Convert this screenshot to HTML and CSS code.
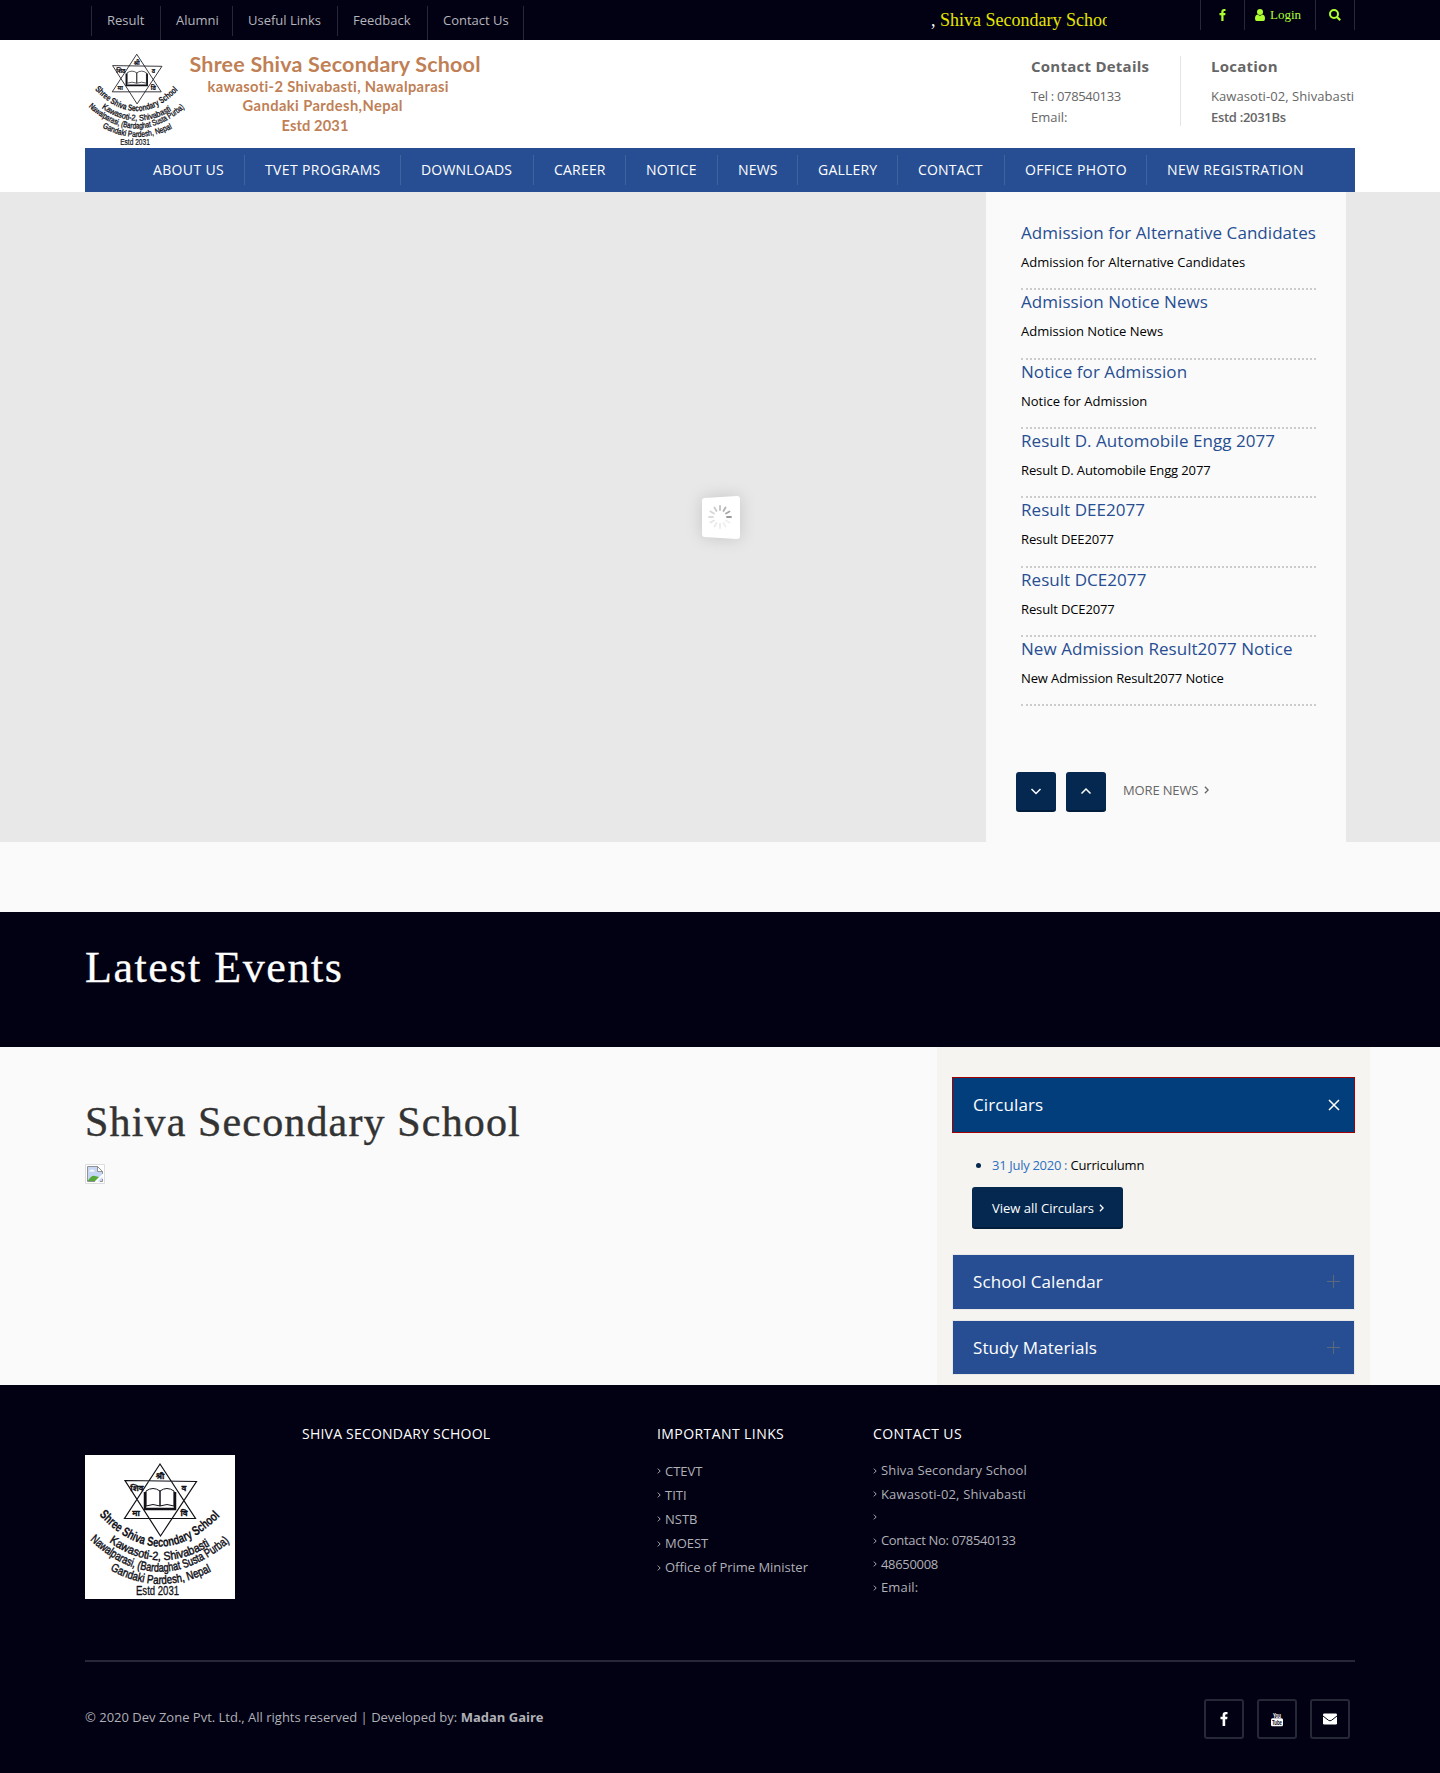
FILE: index.html
```html
<!DOCTYPE html>
<html lang="en">
<head>
<meta charset="utf-8">
<title>Shiva Secondary School</title>
<link rel="stylesheet" href="styles.css">
</head>
<body>
<svg class="defs" aria-hidden="true">
  <defs>
    <symbol id="crest" viewBox="0 0 150 144">
      <path d="M75 9 39.5 63.5h71zM40 25.5l71.500 1L75.500 81z" fill="none" stroke="#111118" stroke-width="1.200"/>
      <path d="M61 36q7-5 14 0v15q-7-3-14 0zM89 36q-7-5-14 0v15q7-3 14 0z" fill="#fff" stroke="#111118"/>
      <path d="M60 37v17h30V37" fill="none" stroke="#111118" stroke-width="2.500"/>
      <g font-family="Noto Sans, sans-serif" font-weight="700" font-size="8" text-anchor="middle" fill="#111118" stroke="#111118" stroke-width=".3">
        <text x="75" y="24">श्री</text><text x="52" y="36">शिव</text><text x="99" y="36">व</text>
        <text x="51" y="61">मा</text><text x="99" y="61">वि</text>
      </g>
      <path id="arc1" d="M14 60Q75 124 137 59" fill="none"/>
      <path id="arc2" d="M24 87Q75 123 129 88" fill="none"/>
      <path id="arc3" d="M5 85Q75 150 150 82" fill="none"/>
      <path id="arc4" d="M25 115Q75 143 129 115" fill="none"/>
      <g font-family="Liberation Sans, sans-serif" fill="#111118" stroke="#111118">
        <text font-size="13" font-weight="700" stroke-width=".2"><textPath href="#arc1" textLength="140" lengthAdjust="spacingAndGlyphs">Shree Shiva Secondary School</textPath></text>
        <text font-size="12" stroke-width=".45"><textPath href="#arc2" textLength="108" lengthAdjust="spacingAndGlyphs">Kawasoti-2, Shivabasti</textPath></text>
        <text font-size="12" stroke-width=".45"><textPath href="#arc3" textLength="156" lengthAdjust="spacingAndGlyphs">Nawalparasi, (Bardaghat Susta Purba)</textPath></text>
        <text font-size="12" stroke-width=".45"><textPath href="#arc4" textLength="106" lengthAdjust="spacingAndGlyphs">Gandaki Pardesh, Nepal</textPath></text>
        <text font-size="12" stroke-width=".3" x="51" y="140" textLength="43" lengthAdjust="spacingAndGlyphs">Estd 2031</text>
      </g>
    </symbol>
    <symbol id="fb" viewBox="0 0 8 14"><path d="M7.500 0v2.300H6.200q-1 0-1 1v1.500h2.300L7.200 7.200h-2V14H2.600V7.200H.5V4.800h2.100V3Q2.600.1 5.500 0z"/></symbol>
    <symbol id="chev" viewBox="0 0 6 10"><path d="m1 1 4 4-4 4" fill="none" stroke="currentColor" stroke-width="1.600"/></symbol>
  </defs>
</svg>

<div class="topbar">
  <div class="container topbar-row">
    <ul class="quick">
      <li>Result</li><li class="tall">Alumni</li><li>Useful Links</li><li>Feedback</li><li class="tall">Contact Us</li><li class="tall"></li>
    </ul>
    <div class="ticker">, <span>Shiva Secondary School</span></div>
    <ul class="tools">
      <li><svg width="7" height="12"><use href="#fb"/></svg></li>
      <li><svg width="10" height="12" viewBox="0 0 10 12"><circle cx="5" cy="3" r="3"/><path d="M2.500 5.500Q5 7.800 7.500 5.500 10 6 10 9.500 10 12 8.300 12H1.700Q0 12 0 9.500 0 6 2.500 5.500z"/></svg><span>Login</span></li>
      <li><svg width="12" height="12" viewBox="0 0 12 12"><circle cx="5" cy="5" r="4" fill="none" stroke="currentColor" stroke-width="2"/><path d="m8 8 3.200 3.200" stroke="currentColor" stroke-width="2.200"/></svg></li>
    </ul>
  </div>
</div>

<header class="masthead">
  <div class="container brand-row">
    <svg class="brand" width="410" height="108" viewBox="0 0 410 108">
      <use href="#crest" x="0" y="8" width="103.500" height="99.400"/>
      <g class="brand-text">
        <text x="104.500" y="32" font-size="21.500" textLength="291">Shree Shiva Secondary School</text>
        <text x="122.500" y="52" font-size="14.700" textLength="241">kawasoti-2 Shivabasti, Nawalparasi</text>
        <text x="157.500" y="71" font-size="14.700" textLength="160">Gandaki Pardesh,Nepal</text>
        <text x="196.500" y="91" font-size="14.700" textLength="67">Estd 2031</text>
      </g>
    </svg>
    <div class="contact">
      <div class="contact-col"><h4>Contact Details</h4><p class="tel">Tel : 078540133</p><p>Email:</p></div>
      <div class="contact-col"><h4>Location</h4><p class="place">Kawasoti-02, Shivabasti</p><p><b>Estd :2031Bs</b></p></div>
    </div>
  </div>
  <nav class="container mainnav">
    <a>ABOUT US</a><a>TVET PROGRAMS</a><a>DOWNLOADS</a><a>CAREER</a><a>NOTICE</a><a>NEWS</a><a>GALLERY</a><a>CONTACT</a><a>OFFICE PHOTO</a><a>NEW REGISTRATION</a>
  </nav>
</header>

<section class="hero">
  <svg class="loader" width="80" height="80" viewBox="0 0 80 80">
    <path class="loader-card" d="M25 19 57 17q3 0 3 3v37q0 3-3 3L25 58q-3 0-3-3V22q0-3 3-3z" fill="#fff"/>
    <g stroke="#999" stroke-width="1.800" stroke-linecap="round">
      <path d="M47 38h4"/><path d="m46 34.500 3.500-2" opacity=".85"/><path d="m43.500 32 2-3.500" opacity=".75"/><path d="M40 31v-4" opacity=".6"/><path d="m36.500 32-2-3.500" opacity=".5"/><path d="m34 34.500-3.500-2" opacity=".4"/><path d="M33 38h-4" opacity=".35"/><path d="m34 41.500-3.500 2" opacity=".25"/><path d="m36.500 44-2 3.500" opacity=".2"/><path d="M40 45v4" opacity=".2"/><path d="m43.500 44 2 3.500" opacity=".15"/><path d="m46 41.500 3.500 2" opacity=".15"/>
    </g>
  </svg>
  <aside class="news">
    <ul>
      <li><h3>Admission for Alternative Candidates</h3><p>Admission for Alternative Candidates</p></li>
      <li><h3>Admission Notice News</h3><p>Admission Notice News</p></li>
      <li><h3>Notice for Admission</h3><p>Notice for Admission</p></li>
      <li><h3>Result D. Automobile Engg 2077</h3><p class="snug">Result D. Automobile Engg 2077</p></li>
      <li><h3>Result DEE2077</h3><p class="snug">Result DEE2077</p></li>
      <li><h3>Result DCE2077</h3><p class="snug">Result DCE2077</p></li>
      <li><h3>New Admission Result2077 Notice</h3><p class="snug">New Admission Result2077 Notice</p></li>
    </ul>
    <div class="news-nav">
      <span class="square"><svg width="12" height="8" viewBox="0 0 12 8"><path d="m1.500 2 4.500 4.500 4.500-4.500" fill="none" stroke="#fff" stroke-width="1.500"/></svg></span>
      <span class="square"><svg width="12" height="8" viewBox="0 0 12 8"><path d="M1.500 6.500 6 2l4.500 4.500" fill="none" stroke="#fff" stroke-width="1.500"/></svg></span>
      <a class="more">MORE NEWS <svg width="5" height="8"><use href="#chev"/></svg></a>
    </div>
  </aside>
</section>

<section class="events"><h2 class="container">Latest Events</h2></section>

<main class="container content">
  <article>
    <h1>Shiva Secondary School</h1>
    <svg class="missing" width="20" height="20" viewBox="0 0 20 20"><path d="M.5.5h19v19H.5z" fill="#fff" stroke="#ddd"/><path d="M2.500 2.500h10l5 5v10h-15z" fill="#c5d7f5"/><path d="M2.500 17.500Q6 11 10 12l4 1-3.500 4.500z" fill="#56a838"/><path d="M4 7.500q1-2 3-2 2 0 3 2z" fill="#fff"/><path d="M17.500 10V7.500l-5-5h-10v15h8M15 17.500h2.500V15" fill="none" stroke="#929292"/><path d="M12.500 2.500v5h5z" fill="#fff" stroke="#929292"/><path d="m10.500 18 8-7.500" stroke="#fff" stroke-width="2"/></svg>
  </article>
  <aside class="side">
    <div class="bar open">Circulars<svg width="12" height="12" viewBox="0 0 12 12"><path d="m1 1 10 10M11 1 1 11" stroke="#fff" stroke-width="1.500"/></svg></div>
    <div class="panel">
      <ul><li><span>31 July 2020 :</span> Curriculumn</li></ul>
      <a class="button">View all Circulars <svg width="5" height="8"><use href="#chev"/></svg></a>
    </div>
    <div class="bar">School Calendar<svg width="13" height="13" viewBox="0 0 13 13"><path d="M0 6.500h13M6.500 0v13" stroke="#5d6878"/></svg></div>
    <div class="bar last">Study Materials<svg width="13" height="13" viewBox="0 0 13 13"><path d="M0 6.500h13M6.500 0v13" stroke="#5d6878"/></svg></div>
  </aside>
</main>

<footer>
  <div class="container foot-cols">
    <svg class="foot-logo" width="150" height="144"><use href="#crest" width="150" height="144"/></svg>
    <h5 class="school">SHIVA SECONDARY SCHOOL</h5>
    <div>
      <h5>IMPORTANT LINKS</h5>
      <ul class="links">
        <li><svg width="4" height="6"><use href="#chev"/></svg>CTEVT</li>
        <li><svg width="4" height="6"><use href="#chev"/></svg>TITI</li>
        <li><svg width="4" height="6"><use href="#chev"/></svg>NSTB</li>
        <li><svg width="4" height="6"><use href="#chev"/></svg>MOEST</li>
        <li><svg width="4" height="6"><use href="#chev"/></svg>Office of Prime Minister</li>
      </ul>
    </div>
    <div>
      <h5>CONTACT US</h5>
      <ul class="links address">
        <li><svg width="4" height="6"><use href="#chev"/></svg>Shiva Secondary School</li>
        <li><svg width="4" height="6"><use href="#chev"/></svg>Kawasoti-02, Shivabasti</li>
        <li><svg width="4" height="6"><use href="#chev"/></svg></li>
        <li class="digits"><svg width="4" height="6"><use href="#chev"/></svg>Contact No: 078540133</li>
        <li class="digits"><svg width="4" height="6"><use href="#chev"/></svg>48650008</li>
        <li><svg width="4" height="6"><use href="#chev"/></svg>Email:</li>
      </ul>
    </div>
  </div>
  <div class="container foot-bottom">
    <p>© 2020 Dev Zone Pvt. Ltd., All rights reserved | Developed by: <strong>Madan Gaire</strong></p>
    <div class="social">
      <span><svg width="8" height="14"><use href="#fb"/></svg></span>
      <span><svg width="20" height="20" viewBox="0 0 20 20"><text class="yt" x="6" y="8.500" font-size="7.500" textLength="8" lengthAdjust="spacingAndGlyphs" fill="#fff">You</text><rect x="4" y="9.300" width="12" height="8" rx="1.500"/><text class="yt" x="5" y="16" font-size="7" textLength="10" lengthAdjust="spacingAndGlyphs" fill="#010113">Tube</text></svg></span>
      <span><svg width="14" height="12" viewBox="0 0 14 12"><rect y=".5" width="14" height="11" rx="1.200"/><path d="m0 3 5.500 4.300q1.500 1 3 0L14 3" fill="none" stroke="#010113"/></svg></span>
    </div>
  </div>
</footer>
</body>
</html>
```
FILE: styles.css
```css
* { box-sizing: border-box; }
body { margin: 0; background: #fafafa; color: #000; font: 13px/21px "Open Sans", sans-serif; }
h1, h2, h3, h4, h5, p, ul { margin: 0; padding: 0; font-weight: 400; }
ul { list-style: none; }
svg { display: block; flex: none; fill: currentColor; }
.defs { position: absolute; width: 0; height: 0; }
.container { width: 1270px; margin: 0 auto; }

.topbar { height: 40px; background: #010113; color: #b5b5bb; }
.topbar-row { display: flex; }
.quick { display: grid; grid-template-columns: 69px 72px 105px 90px 96px 1px; padding: 6px 0 0 6px; width: 840px; align-items: start; }
.quick li { height: 30px; padding-left: 15px; line-height: 28px; border-left: 1px solid #272836; white-space: nowrap; }
.quick li.tall { height: 34px; }
.quick li:last-child { padding: 0; }
.ticker { width: 182px; padding-left: 6px; overflow: hidden; white-space: nowrap; font: 18px/40px "Liberation Serif", serif; color: #fff; }
.ticker span { color: #e6e600; }
.tools { display: grid; grid-template-columns: 44px 71px 39px; height: 30px; margin-left: auto; color: #adff2f; border-right: 1px solid #272836; }
.tools li { display: flex; justify-content: center; align-items: center; gap: 5px; border-left: 1px solid #272836; font: 13px/30px "Liberation Serif", serif; padding-right: 1px; }
.tools li:nth-child(2) { padding-right: 4px; }

.masthead { height: 152px; background: #fff; }
.brand-row { display: flex; justify-content: space-between; height: 108px; }
.brand-text { font-family: Lato, sans-serif; font-weight: 700; fill: #c07f55; font-variant-ligatures: none; }
.contact { display: flex; height: 70px; margin-top: 16px; color: #666; }
.contact-col:first-child { width: 119px; }
.contact-col + .contact-col { border-left: 1px solid #e5e5e5; margin-left: 30px; padding-left: 30px; width: 175px; white-space: nowrap; }
.contact h4 { font-size: 15px; font-weight: 700; line-height: 20px; margin-bottom: 10px; letter-spacing: .25px; }
.contact b { font-weight: 600; letter-spacing: -.3px; }
.tel { letter-spacing: -.33px; }
.place { letter-spacing: .07px; }
.mainnav { display: grid; grid-template-columns: 112px 156px 133px 92px 92px 80px 100px 107px 142px 180px; height: 44px; padding: 7px 0 0 48px; background: #274e92; color: #fff; letter-spacing: .35px; }
.mainnav a { height: 30px; padding-left: 20px; line-height: 30px; font-size: 14px; border-right: 1px solid #3f639f; white-space: nowrap; }
.mainnav a:nth-child(n+3):nth-child(-n+8) { letter-spacing: .2px; }
.mainnav a:last-child { border: 0; }

.hero { position: relative; height: 650px; margin-bottom: 70px; background: #e8e8e8; display: flex; }
.loader { position: absolute; left: 680px; top: 287px; }
.loader-card { filter: drop-shadow(0 0 8px rgba(0, 0, 0, .15)); }
.news { width: 360px; margin-left: 986px; padding: 29px 30px 0; background: #fafafa; }
.news ul { height: 551px; padding: 0 0 0 5px; }
.news li { height: 69.33px; border-bottom: 2px dotted #ccc; }
.news h3 { font-size: 17px; line-height: 23px; color: #274e92; white-space: nowrap; letter-spacing: .05px; }
.news p { padding-top: 8px; line-height: 21px; }
.snug { letter-spacing: -.12px; }
.news-nav { display: flex; gap: 10px; }
.square { display: flex; align-items: center; justify-content: center; width: 40px; height: 40px; border-radius: 3px; background: #04284f; border-bottom: 2px solid #021d3b; }
.more { display: flex; align-items: center; gap: 6px; height: 36px; margin-left: 7px; color: #666; letter-spacing: -.15px; }

.events { height: 135px; background: #010113; color: #fff; }
.events h2 { font: 44px/112px "Liberation Serif", serif; letter-spacing: 1.55px; -webkit-text-stroke: .3px; }
h1 { font: 42px/60px "Liberation Serif", serif; letter-spacing: 1.15px; color: #333; -webkit-text-stroke: .4px; }
.content { display: flex; justify-content: space-between; height: 338px; }
article { padding-top: 45px; }
.missing { margin-top: 12px; }
.side { width: 433px; margin-right: -15px; padding: 30px 15px 0; background: #f6f4f0; }
.bar { display: flex; align-items: center; justify-content: space-between; height: 56px; padding: 0 14px 0 20px; border: 1px solid #e8e8e8; background: #274e92; color: #fff; font-size: 17px; line-height: 23px; letter-spacing: .1px; padding-bottom: 1px; }
.bar.open { background: #013e7b; border-color: #a00000; }
.bar.last { margin-top: 10px; height: 55px; padding-bottom: 0; }
.panel { height: 121px; padding: 22px 20px 0; }
.panel li { position: relative; padding-left: 20px; letter-spacing: -.15px; }
.panel li::before { content: ""; position: absolute; left: 4px; top: 8px; width: 5px; height: 5px; border-radius: 50%; background: #04284f; }
.panel li span { color: #2d70c0; letter-spacing: -.3px; }
.button { display: flex; align-items: center; gap: 5px; width: 151px; height: 42px; margin-top: 11px; padding: 2px 0 0 20px; border-radius: 3px; background: #04284f; border-bottom: 2px solid #021d3b; color: #fff; }

footer { height: 388px; background: #010113; color: #b0b0b6; }
.foot-cols { display: grid; grid-template-columns: 217px 355px 216px 1fr; height: 275px; padding-top: 35px; }
.foot-logo { margin-top: 35px; background: #fff; }
h5 { font-size: 14px; line-height: 28px; color: #fff; letter-spacing: .42px; }
h5.school { letter-spacing: .22px; }
.links { padding-top: 11px; }
.links li { display: flex; align-items: center; gap: 4px; height: 24.2px; letter-spacing: -.02px; }
.links.address { padding-top: 11px; }
.links.address li { height: 23.4px; letter-spacing: .15px; }
.links.address li.digits { letter-spacing: -.32px; }
.foot-bottom { display: flex; justify-content: space-between; padding: 37px 5px 0 0; border-top: 2px solid #262838; }
.foot-bottom p { line-height: 36px; }
.foot-bottom strong { font-weight: 700; }
.social { display: flex; gap: 13px; color: #fff; }
.social span { display: flex; align-items: center; justify-content: center; width: 40px; height: 40px; border: 2px solid #262838; border-radius: 3px; }
.yt { font-family: "Liberation Sans", sans-serif; font-weight: 700; }
```
